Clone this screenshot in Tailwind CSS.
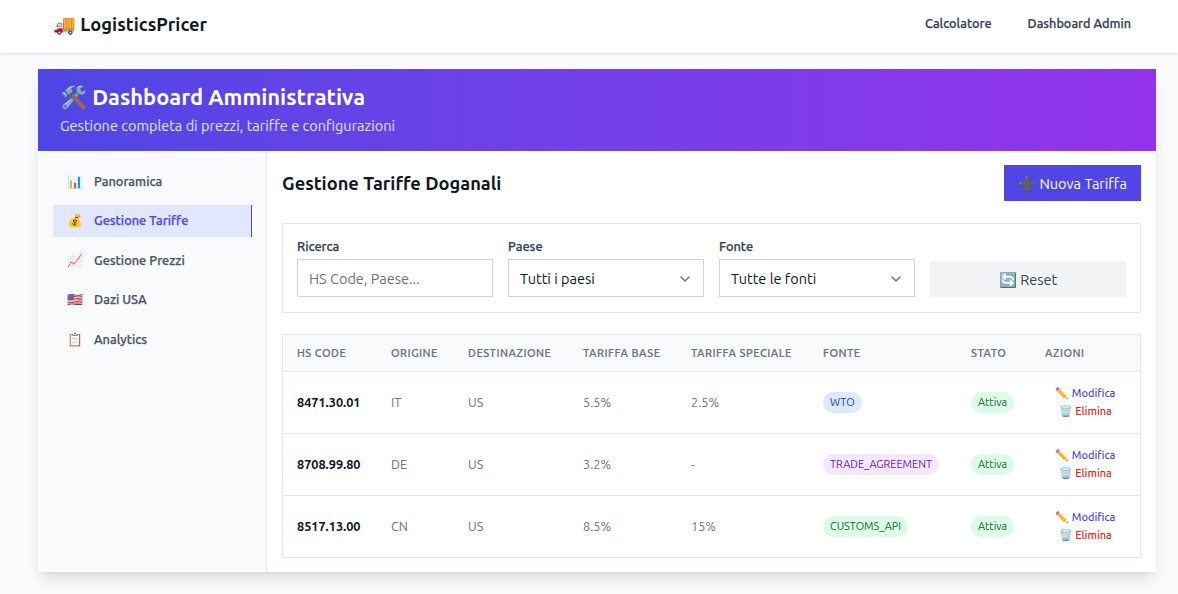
<!DOCTYPE html>
<html lang="it">
  <head>
    <meta charset="UTF-8" />
    <meta name="viewport" content="width=device-width, initial-scale=1.0" />
    <title>LogisticsPricer - Dashboard Admin</title>
    <script src="https://cdn.jsdelivr.net/npm/@tailwindcss/browser@4"></script>
  </head>
  <body class="bg-[#f9fafb] font-[Ubuntu,'Noto_Sans',sans-serif] h-[594px] overflow-hidden">
    <nav class="h-[53px] bg-white shadow-[0_1px_3px_rgba(0,0,0,0.12)] flex items-center justify-between pl-[53px] pr-[47px] pb-[3px]">
      <a href="#" class="text-[18.25px] font-bold text-[#111827]">🚚 LogisticsPricer</a>
      <div class="flex gap-[36px] pb-[2px] text-[12.7px] font-medium [-webkit-text-stroke:0.25px] text-[#374151]">
        <a href="#">Calcolatore</a>
        <a href="#">Dashboard Admin</a>
      </div>
    </nav>

    <main class="ml-[38px] mr-[22px] mt-4 bg-white shadow-[0_10px_15px_-3px_rgba(0,0,0,0.1),0_4px_6px_-4px_rgba(0,0,0,0.1)]">
      <header class="h-[82px] bg-linear-to-r from-[#4f46e5] to-[#9333ea] px-[22px] pt-[13px] text-white">
        <h1 class="text-[21.85px] leading-[30px] font-bold">🛠️ Dashboard Amministrativa</h1>
        <p class="mt-[4px] text-[14.5px] leading-5 text-[#e0e7ff]">Gestione completa di prezzi, tariffe e configurazioni</p>
      </header>

      <div class="flex h-[421px]">
        <aside class="w-[229px] shrink-0 bg-[#f9fafb] border-r border-[#e5e7eb] pl-[15px] pr-[14px] pt-[14.5px]">
          <ul class="flex flex-col gap-2 text-[12.8px] font-medium text-[#4b5563]">
            <li class="h-[31.5px] flex items-center pl-[14px]"><span class="w-[27px]">📊</span><span class="[-webkit-text-stroke:0.25px]">Panoramica</span></li>
            <li class="h-[31.5px] flex items-center pl-[14px] bg-[#e0e7ff] text-[#4f46e5] border-r border-[#4f46e5]"><span class="w-[27px]">💰</span><span class="[-webkit-text-stroke:0.25px]">Gestione Tariffe</span></li>
            <li class="h-[31.5px] flex items-center pl-[14px]"><span class="w-[27px]">📈</span><span class="[-webkit-text-stroke:0.25px]">Gestione Prezzi</span></li>
            <li class="h-[31.5px] flex items-center pl-[14px]"><span class="w-[27px]">🇺🇸</span><span class="[-webkit-text-stroke:0.25px]">Dazi USA</span></li>
            <li class="h-[31.5px] flex items-center pl-[14px]"><span class="w-[27px]">📋</span><span class="[-webkit-text-stroke:0.25px]">Analytics</span></li>
          </ul>
        </aside>

        <section class="flex-1 px-[15px] pt-[14px]">
          <div class="flex items-center justify-between">
            <h2 class="pt-[2px] text-[18.25px] font-bold text-[#111827]">Gestione Tariffe Doganali</h2>
            <button class="h-[36px] w-[137px] pt-[1px] bg-[#4f46e5] text-[14.5px] text-white">➕ Nuova Tariffa</button>
          </div>

          <div class="mt-[22px] h-[90px] border border-[#e5e7eb] px-[14px] pt-[14px] pb-[15px] grid grid-cols-4 gap-[15px] items-end">
            <div class="text-[12.8px] leading-4 font-medium text-[#374151]">
              <label class="[-webkit-text-stroke:0.25px]">Ricerca</label>
              <input type="text" placeholder="HS Code, Paese..." class="mt-[5px] block w-full h-[38px] border border-[#d1d5db] pt-[1px] px-[11px] text-[14.5px] font-normal placeholder:text-[#6b7280]" />
            </div>
            <div class="text-[12.8px] leading-4 font-medium text-[#374151]">
              <label class="[-webkit-text-stroke:0.25px]">Paese</label>
              <div class="mt-[5px] h-[38px] border border-[#d1d5db] pt-[1px] px-[11px] flex items-center justify-between text-[14.5px] font-normal text-[#111827]">
                Tutti i paesi
                <svg class="w-5 h-5 -mr-[3px]" viewBox="0 0 20 20" fill="none" stroke="#6b7280" stroke-width="1.5" stroke-linecap="round" stroke-linejoin="round"><path d="M6 8l4 4 4-4" /></svg>
              </div>
            </div>
            <div class="text-[12.8px] leading-4 font-medium text-[#374151]">
              <label class="[-webkit-text-stroke:0.25px]">Fonte</label>
              <div class="mt-[5px] h-[38px] border border-[#d1d5db] pt-[1px] px-[11px] flex items-center justify-between text-[14.5px] font-normal text-[#111827]">
                Tutte le fonti
                <svg class="w-5 h-5 -mr-[3px]" viewBox="0 0 20 20" fill="none" stroke="#6b7280" stroke-width="1.5" stroke-linecap="round" stroke-linejoin="round"><path d="M6 8l4 4 4-4" /></svg>
              </div>
            </div>
            <button class="h-[36px] pt-[2px] bg-[#f3f4f6] text-[14.5px] text-[#374151]">🔄 Reset</button>
          </div>

          <table class="mt-[21px] w-full table-fixed border border-[#e5e7eb] border-collapse text-[12.7px] text-[#6b7280]">
            <colgroup>
              <col class="w-[94px]" /><col class="w-[77px]" /><col class="w-[115px]" /><col class="w-[108px]" />
              <col class="w-[132px]" /><col class="w-[148px]" /><col class="w-[74px]" /><col />
            </colgroup>
            <thead class="bg-[#f9fafb] text-[11px] font-medium tracking-[0.5px] uppercase [-webkit-text-stroke:0.2px]">
              <tr class="h-[37px] border-b border-[#e5e7eb] text-left">
                <th class="pl-[14px] font-medium">HS Code</th>
                <th class="pl-[14.5px] font-medium">Origine</th>
                <th class="pl-[14.5px] font-medium">Destinazione</th>
                <th class="pl-[14.5px] font-medium">Tariffa Base</th>
                <th class="pl-[14.5px] font-medium">Tariffa Speciale</th>
                <th class="pl-[14.5px] font-medium">Fonte</th>
                <th class="pl-[14.5px] font-medium">Stato</th>
                <th class="pl-[14.5px] font-medium">Azioni</th>
              </tr>
            </thead>
            <tbody>
              <tr class="h-[62px] border-b border-[#e5e7eb]">
                <td class="pl-[14px] font-bold text-[#111827]">8471.30.01</td>
                <td class="pl-[14.5px]">IT</td>
                <td class="pl-[14.5px]">US</td>
                <td class="pl-[14.5px]">5.5%</td>
                <td class="pl-[14.5px]">2.5%</td>
                <td class="pl-[14.5px]"><span class="inline-block rounded-full px-[7px] leading-[21px] text-[10.9px] bg-[#dbeafe] text-[#1e40af]">WTO</span></td>
                <td class="pl-[14.5px]"><span class="inline-block rounded-full px-[7px] leading-[21px] text-[10.9px] bg-[#dcfce7] text-[#166534]">Attiva</span></td>
                <td class="pb-[2px] text-center text-[11px] leading-[18px] font-medium">
                  <a href="#" class="block text-[#4f46e5]">✏️ Modifica</a>
                  <a href="#" class="block text-[#dc2626]">🗑️ Elimina</a>
                </td>
              </tr>
              <tr class="h-[62px] border-b border-[#e5e7eb]">
                <td class="pl-[14px] font-bold text-[#111827]">8708.99.80</td>
                <td class="pl-[14.5px]">DE</td>
                <td class="pl-[14.5px]">US</td>
                <td class="pl-[14.5px]">3.2%</td>
                <td class="pl-[14.5px]">-</td>
                <td class="pl-[14.5px]"><span class="inline-block rounded-full px-[7px] leading-[21px] text-[10.9px] bg-[#f3e8ff] text-[#6b21a8]">TRADE_AGREEMENT</span></td>
                <td class="pl-[14.5px]"><span class="inline-block rounded-full px-[7px] leading-[21px] text-[10.9px] bg-[#dcfce7] text-[#166534]">Attiva</span></td>
                <td class="pb-[2px] text-center text-[11px] leading-[18px] font-medium">
                  <a href="#" class="block text-[#4f46e5]">✏️ Modifica</a>
                  <a href="#" class="block text-[#dc2626]">🗑️ Elimina</a>
                </td>
              </tr>
              <tr class="h-[62px]">
                <td class="pl-[14px] font-bold text-[#111827]">8517.13.00</td>
                <td class="pl-[14.5px]">CN</td>
                <td class="pl-[14.5px]">US</td>
                <td class="pl-[14.5px]">8.5%</td>
                <td class="pl-[14.5px]">15%</td>
                <td class="pl-[14.5px]"><span class="inline-block rounded-full px-[7px] leading-[21px] text-[10.9px] bg-[#dcfce7] text-[#166534]">CUSTOMS_API</span></td>
                <td class="pl-[14.5px]"><span class="inline-block rounded-full px-[7px] leading-[21px] text-[10.9px] bg-[#dcfce7] text-[#166534]">Attiva</span></td>
                <td class="pb-[2px] text-center text-[11px] leading-[18px] font-medium">
                  <a href="#" class="block text-[#4f46e5]">✏️ Modifica</a>
                  <a href="#" class="block text-[#dc2626]">🗑️ Elimina</a>
                </td>
              </tr>
            </tbody>
          </table>
        </section>
      </div>
    </main>
  </body>
</html>
